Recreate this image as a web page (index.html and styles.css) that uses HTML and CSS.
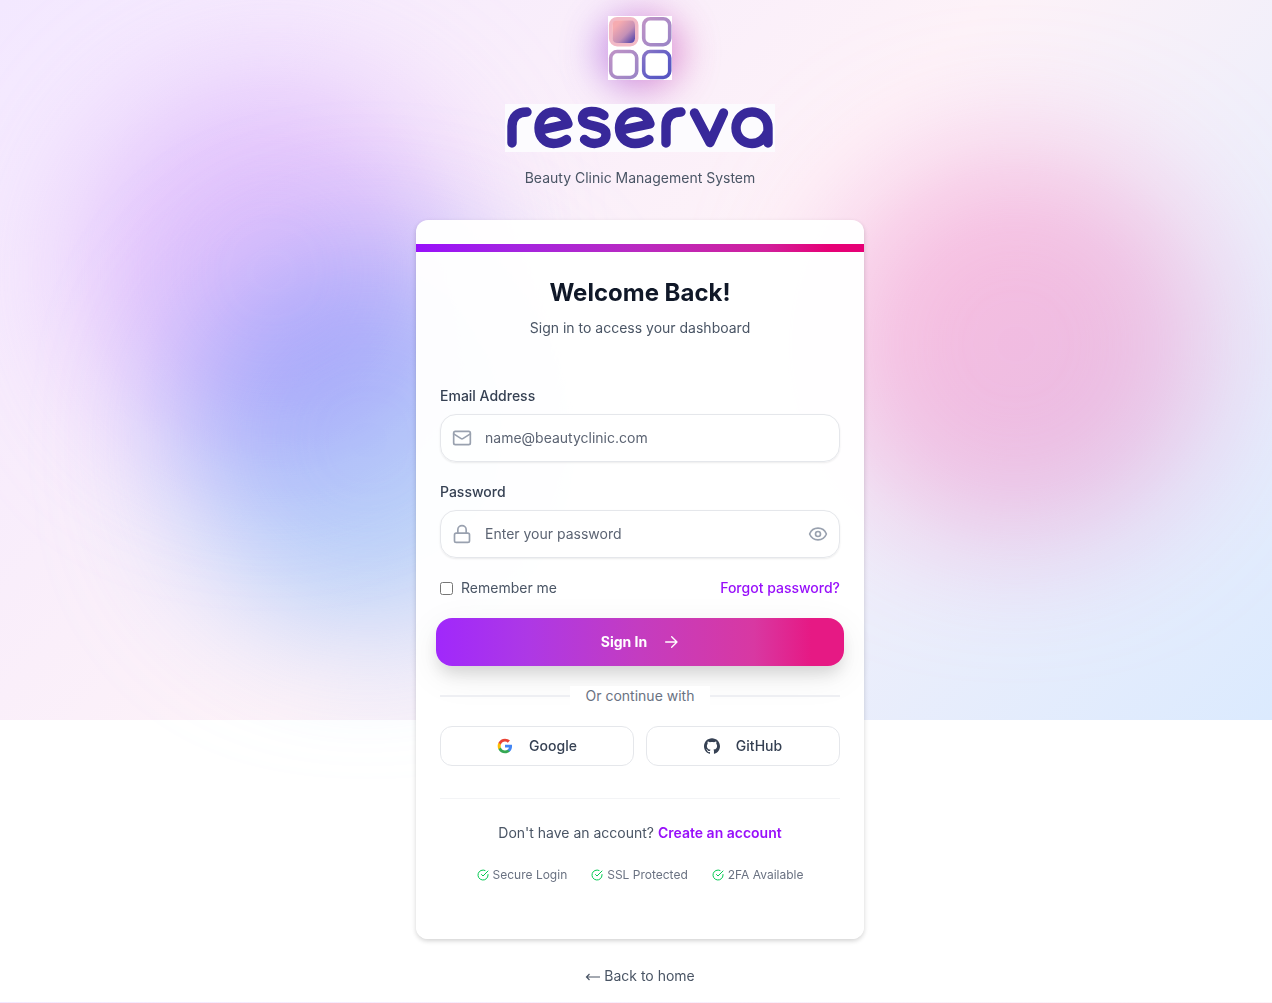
FILE: index.html
```html
<!DOCTYPE html>
<html lang="en">
<head>
<meta charset="utf-8">
<title>Reserva – Sign In</title>
<meta name="viewport" content="width=device-width, initial-scale=1">
<link rel="stylesheet" href="styles.css">
</head>
<body>
<div class="backdrop" aria-hidden="true">
  <div class="blob blob-purple"></div>
  <div class="blob blob-pink"></div>
  <div class="blob blob-blue"></div>
</div>
<main class="page">
  <header class="brand">
    <div class="brand-mark">
      <svg class="mark" viewBox="0 0 64 64" role="img" aria-label="Reserva logo">
        <defs>
          <linearGradient id="g-fill" x1="0" y1="0" x2="1" y2="1">
            <stop offset="0.2" stop-color="#f6abb0"/><stop offset="0.6" stop-color="#c490b6"/><stop offset="1" stop-color="#433aaa"/>
          </linearGradient>
          <linearGradient id="g-mid" x1="0" y1="0" x2="1" y2="1">
            <stop offset="0" stop-color="#bf93c6"/><stop offset="1" stop-color="#9a84c6"/>
          </linearGradient>
          <linearGradient id="g-end" x1="0" y1="0" x2="1" y2="1">
            <stop offset="0" stop-color="#8a76c6"/><stop offset="0.6" stop-color="#5f5cc6"/><stop offset="1" stop-color="#5654c0"/>
          </linearGradient>
        </defs>
        <rect width="64" height="64" fill="#fff"/>
        <g fill="none" stroke-width="3.6">
          <rect x="2.7" y="2.7" width="26" height="26" rx="6.5" stroke="#f2b9c6"/>
          <rect x="35.7" y="2.7" width="26" height="26" rx="6.5" stroke="url(#g-mid)"/>
          <rect x="2.7" y="35.5" width="26" height="26" rx="6.5" stroke="url(#g-mid)"/>
          <rect x="35.7" y="35.5" width="26" height="26" rx="6.5" stroke="url(#g-end)"/>
        </g>
        <rect x="4.4" y="4.2" width="22.6" height="22.8" rx="4.5" fill="url(#g-fill)"/>
      </svg>
    </div>
    <svg class="wordmark" viewBox="0 0 270 48" role="img" aria-label="reserva">
      <rect width="270" height="48" fill="#fcfbfe"/>
      <g fill="none" stroke="#38289a" stroke-width="9.4" stroke-linecap="round" stroke-linejoin="round">
        <path d="M7 39V22C7 12 13 8 22 8"/>
        <path d="M40 25 63 20C60 11 55 8 48.500 8C40 8 34 15 34 24C34 33 40 39.500 48.500 39.500C54 39.500 58 38 61.500 35.500"/>
        <path d="M99 11.500C95 8 90 7.500 86.500 7.500C81 7.500 77.500 10 77.500 14.500C77.500 24.500 101 19 101 30.500C101 37 95 39.500 89.500 39.500C85 39.500 82 38 79.500 35.500"/>
        <path d="M121 25 145 20C142 11 137 8 130 8C121 8 114.500 15 114.500 24C114.500 33 121 39.500 130 39.500C135.500 39.500 140 38 144 35.500"/>
        <path d="M161 39V22C161 12 167 8 176 8"/>
        <path d="M189.500 9 205 38.500 218.500 9"/>
        <path d="M263 39V24C263 14.500 256 8 247 8C238 8 231 15 231 24C231 33 238 39.500 247 39.500C254 39.500 261 34 263 27"/>
      </g>
    </svg>
    <p class="tagline">Beauty Clinic Management System</p>
  </header>

  <section class="card">
    <div class="accent"></div>
    <div class="card-head">
      <h1>Welcome Back!</h1>
      <p>Sign in to access your dashboard</p>
    </div>
    <form class="form" onsubmit="return false">
      <div class="field">
        <label for="email">Email Address</label>
        <div class="control">
          <svg class="icon" viewBox="0 0 24 24"><rect x="2" y="4" width="20" height="16" rx="2"/><path d="m22 7-8.970 5.700a1.940 1.940 0 0 1-2.060 0L2 7"/></svg>
          <input id="email" type="email" placeholder="name@beautyclinic.com">
        </div>
      </div>
      <div class="field">
        <label for="password">Password</label>
        <div class="control">
          <svg class="icon" viewBox="0 0 24 24"><rect x="3" y="11" width="18" height="11" rx="2"/><path d="M7 11V7a5 5 0 0 1 10 0v4"/></svg>
          <input id="password" type="password" placeholder="Enter your password">
          <button class="reveal" type="button" aria-label="Show password">
            <svg class="icon" viewBox="0 0 24 24"><path d="M2.062 12.348a1 1 0 0 1 0-.696 10.750 10.750 0 0 1 19.876 0 1 1 0 0 1 0 .696 10.750 10.750 0 0 1-19.876 0"/><circle cx="12" cy="12" r="3"/></svg>
          </button>
        </div>
      </div>
      <div class="options">
        <label class="remember" for="remember"><input id="remember" type="checkbox">Remember me</label>
        <a class="link" href="#">Forgot password?</a>
      </div>
      <button class="submit" type="submit">Sign In
        <svg viewBox="0 0 24 24"><path d="M4 12h17M13 4l8 8-8 8"/></svg>
      </button>
      <div class="divider"><span>Or continue with</span></div>
      <div class="providers">
        <button type="button">
          <svg viewBox="0 0 24 24"><path fill="#4285F4" d="M22.560 12.250c0-.780-.070-1.530-.200-2.250H12v4.260h5.920c-.260 1.370-1.040 2.530-2.210 3.310v2.770h3.570c2.080-1.920 3.280-4.740 3.280-8.090z"/><path fill="#34A853" d="M12 23c2.970 0 5.460-.980 7.280-2.660l-3.570-2.770c-.980.660-2.230 1.060-3.710 1.060-2.860 0-5.290-1.930-6.160-4.530H2.180v2.840C3.990 20.530 7.700 23 12 23z"/><path fill="#FBBC05" d="M5.840 14.090c-.220-.660-.350-1.360-.350-2.090s.130-1.430.350-2.090V7.070H2.180C1.430 8.550 1 10.220 1 12s.430 3.450 1.180 4.930l3.660-2.840z"/><path fill="#EA4335" d="M12 5.380c1.620 0 3.060.560 4.210 1.640l3.150-3.150C17.450 2.090 14.970 1 12 1 7.700 1 3.990 3.470 2.180 7.070l3.660 2.840c.870-2.600 3.300-4.530 6.160-4.530z"/></svg>
          Google
        </button>
        <button type="button">
          <svg viewBox="0 0 24 24"><path fill="currentColor" d="M12 .297c-6.630 0-12 5.373-12 12 0 5.303 3.438 9.800 8.205 11.385.600.113.820-.258.820-.577 0-.285-.010-1.040-.015-2.040-3.338.724-4.042-1.610-4.042-1.610C4.422 18.070 3.633 17.700 3.633 17.700c-1.087-.744.084-.729.084-.729 1.205.084 1.838 1.236 1.838 1.236 1.070 1.835 2.809 1.305 3.495.998.108-.776.417-1.305.760-1.605-2.665-.300-5.466-1.332-5.466-5.930 0-1.310.465-2.380 1.235-3.220-.135-.303-.540-1.523.105-3.176 0 0 1.005-.322 3.300 1.230.960-.267 1.980-.399 3-.405 1.020.006 2.040.138 3 .405 2.280-1.552 3.285-1.230 3.285-1.230.645 1.653.240 2.873.120 3.176.765.840 1.230 1.910 1.230 3.220 0 4.610-2.805 5.625-5.475 5.920.420.360.810 1.096.810 2.220 0 1.606-.015 2.896-.015 3.286 0 .315.210.690.825.570C20.565 22.092 24 17.592 24 12.297c0-6.627-5.373-12-12-12"/></svg>
          GitHub
        </button>
      </div>
    </form>
    <footer class="card-foot">
      <p>Don't have an account? <a class="link strong" href="#">Create an account</a></p>
      <ul class="badges">
        <li><svg viewBox="0 0 24 24"><path d="M22 11.080V12a10 10 0 1 1-5.930-9.140"/><path d="m9 11 3 3L22 4"/></svg>Secure Login</li>
        <li><svg viewBox="0 0 24 24"><path d="M22 11.080V12a10 10 0 1 1-5.930-9.140"/><path d="m9 11 3 3L22 4"/></svg>SSL Protected</li>
        <li><svg viewBox="0 0 24 24"><path d="M22 11.080V12a10 10 0 1 1-5.930-9.140"/><path d="m9 11 3 3L22 4"/></svg>2FA Available</li>
      </ul>
    </footer>
  </section>
  <a class="home" href="#"><svg class="arrow" viewBox="0 0 16 16" aria-hidden="true"><path d="M15 9H1.500M4.500 6 1.500 9l3 3"/></svg>Back to home</a>
</main>
<div class="page-end"></div>
</body>
</html>
```

FILE: styles.css
```css
* {
  box-sizing: border-box;
  margin: 0;
  padding: 0;
}

body {
  position: relative;
  overflow-x: hidden;
  background: #fff;
  color: #4a5565;
  font: 14px/20px Inter, "Liberation Sans", sans-serif;
}

input,
button {
  font: inherit;
  color: inherit;
}

button {
  cursor: pointer;
}

a {
  color: inherit;
  text-decoration: none;
}

svg {
  display: block;
  flex: none;
}

/* Soft coloured glow behind the form */
.backdrop {
  position: absolute;
  top: 0;
  left: 0;
  right: 0;
  height: 720px;
  background: linear-gradient(135deg, #f3e8ff, #fdf2f8 50%, #dbeafe);
}

.blob {
  position: absolute;
  width: 384px;
  height: 384px;
  border-radius: 50%;
  filter: blur(64px);
  mix-blend-mode: multiply;
  opacity: 0.6;
}

.blob-purple {
  top: 80px;
  left: 80px;
  background: #dab2ff;
}

.blob-pink {
  top: 152px;
  right: 64px;
  background: #ffa5d5;
}

.blob-blue {
  bottom: 88px;
  left: 176px;
  background: #8ec5ff;
}

.page {
  position: relative;
  display: flex;
  flex-direction: column;
  align-items: center;
  padding: 16px 16px 16px 24px;
}

.brand {
  display: flex;
  flex-direction: column;
  align-items: center;
  margin-bottom: 32px;
}

.brand-mark {
  position: relative;
  margin-bottom: 24px;
}

.brand-mark::before {
  content: "";
  position: absolute;
  inset: 0 -8px -8px;
  border-radius: 50%;
  background: linear-gradient(90deg, #8a3fe0, #d0309c);
  filter: blur(20px);
  opacity: 0.6;
}

.mark {
  position: relative;
  width: 64px;
  height: 64px;
}

.wordmark {
  position: relative;
  width: 270px;
  height: 48px;
  margin-bottom: 16px;
}

.card {
  width: 100%;
  max-width: 448px;
  padding: 24px 0 56px;
  border-radius: 12px;
  background: rgba(255, 255, 255, 0.97);
  box-shadow: 0 2px 4px rgba(0, 0, 0, 0.12), 0 2px 6px rgba(0, 0, 0, 0.06);
}

.accent {
  height: 8px;
  background: linear-gradient(90deg, #9810fa, #a424e0 22%, #b92ac0 50%, #d0209c 78%, #e60076 92%);
}

.card-head {
  padding: 25px 24px 0;
  text-align: center;
}

h1 {
  margin-bottom: 9px;
  color: #101828;
  font-size: 24px;
  font-weight: 700;
  line-height: 32px;
}

.form {
  display: flex;
  flex-direction: column;
  gap: 20px;
  padding: 48px 24px 0;
}

.field {
  display: flex;
  flex-direction: column;
  gap: 8px;
}

.field label {
  color: #364153;
  font-weight: 500;
}

.control {
  display: flex;
  align-items: center;
  height: 48px;
  padding: 0 11px;
  gap: 13px;
  border: 1px solid #e5e7eb;
  border-radius: 16px;
  background: rgba(255, 255, 255, 0.5);
  box-shadow: 0 1px 2px rgba(0, 0, 0, 0.08);
}

.control input {
  flex: 1;
  min-width: 0;
  border: 0;
  outline: 0;
  background: none;
}

.control input::placeholder {
  color: #5c6473;
  opacity: 1;
}

.icon {
  width: 20px;
  height: 20px;
  fill: none;
  stroke: #99a1af;
  stroke-width: 2;
  stroke-linecap: round;
  stroke-linejoin: round;
}

.reveal {
  border: 0;
  background: none;
}

.options {
  display: flex;
  justify-content: space-between;
}

.remember {
  display: flex;
  align-items: center;
  gap: 8px;
}

.remember input {
  width: 13px;
  height: 13px;
}

.link {
  color: #9810fa;
  font-weight: 500;
}

.strong {
  font-weight: 600;
}

.submit {
  display: flex;
  align-items: center;
  justify-content: center;
  gap: 16px;
  height: 48px;
  margin: 0 -4px;
  border: 0;
  border-radius: 16px;
  background: linear-gradient(90deg, #a028fb, #ad38e6 22%, #c43cc0 50%, #d838a2 78%, #e61984 92%);
  box-shadow: 0 10px 15px -3px rgba(0, 0, 0, 0.12), 0 10px 36px rgba(0, 0, 0, 0.08);
  color: #fff;
  font-weight: 700;
}

.submit svg {
  width: 16px;
  height: 16px;
  fill: none;
  stroke: currentColor;
  stroke-width: 2;
  stroke-linecap: round;
  stroke-linejoin: round;
}

.divider {
  display: flex;
  align-items: center;
  color: #6a7282;
}

.divider::before,
.divider::after {
  content: "";
  flex: 1;
  height: 2px;
  background: #eeeff3;
}

.divider span {
  padding: 0 16px;
  background: #fff;
}

.providers {
  display: grid;
  grid-template-columns: 1fr 1fr;
  gap: 12px;
}

.providers button {
  display: flex;
  align-items: center;
  justify-content: center;
  gap: 16px;
  height: 40px;
  border: 1px solid #e5e7eb;
  border-radius: 12px;
  background: #fff;
  color: #364153;
  font-weight: 500;
}

.providers svg {
  width: 16px;
  height: 16px;
}

.card-foot {
  margin: 32px 24px 0;
  padding-top: 24px;
  border-top: 1px solid #f3f4f6;
  text-align: center;
}

.badges {
  display: flex;
  justify-content: center;
  gap: 24px;
  margin-top: 24px;
  color: #6a7282;
  font-size: 12px;
  line-height: 16px;
  list-style: none;
}

.badges li {
  display: flex;
  align-items: center;
  gap: 4px;
}

.badges svg {
  width: 12px;
  height: 12px;
  fill: none;
  stroke: #00c950;
  stroke-width: 2;
  stroke-linecap: round;
  stroke-linejoin: round;
}

.home {
  display: flex;
  align-items: center;
  gap: 3px;
  margin-top: 27px;
}

.arrow {
  width: 16px;
  height: 16px;
  fill: none;
  stroke: currentColor;
  stroke-width: 1.2;
}

.page-end {
  height: 1px;
  background: linear-gradient(90deg, #f3e8ff, #fdf2f8);
}
```
